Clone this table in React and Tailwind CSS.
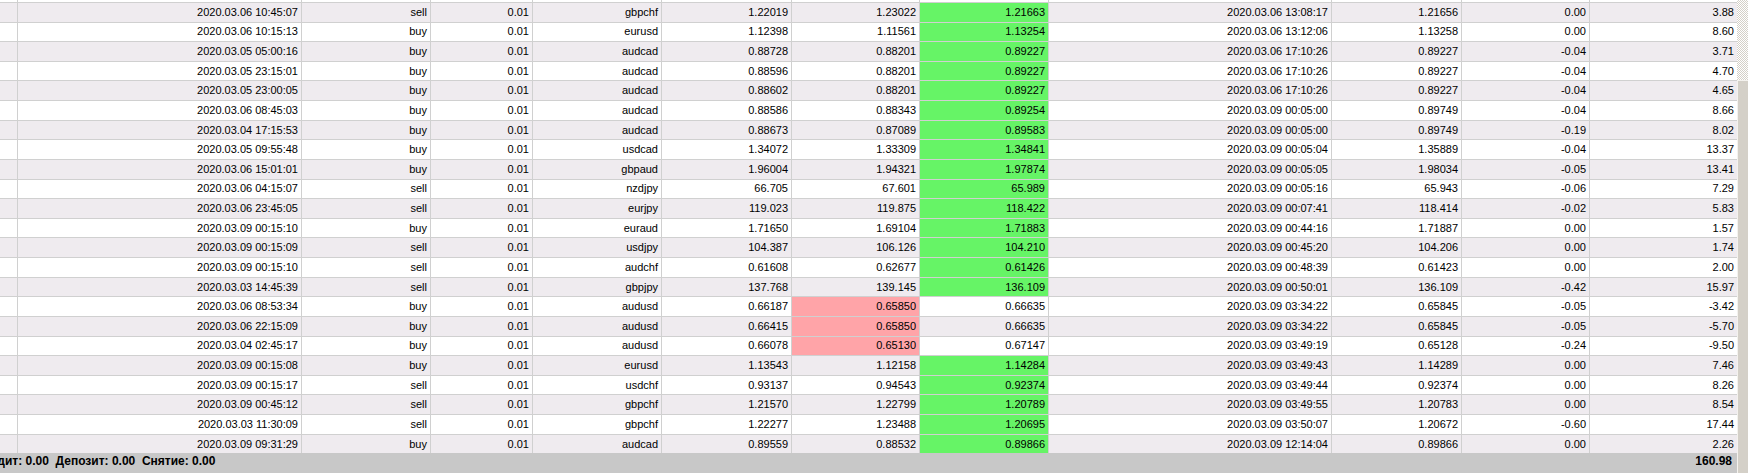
import React from "react";

const rows = [
  ["2020.03.06 10:45:07","sell","gbpchf","1.22019","1.23022","1.21663","2020.03.06 13:08:17","1.21656","0.00","3.88","g"],
  ["2020.03.06 10:15:13","buy","eurusd","1.12398","1.11561","1.13254","2020.03.06 13:12:06","1.13258","0.00","8.60","g"],
  ["2020.03.05 05:00:16","buy","audcad","0.88728","0.88201","0.89227","2020.03.06 17:10:26","0.89227","-0.04","3.71","g"],
  ["2020.03.05 23:15:01","buy","audcad","0.88596","0.88201","0.89227","2020.03.06 17:10:26","0.89227","-0.04","4.70","g"],
  ["2020.03.05 23:00:05","buy","audcad","0.88602","0.88201","0.89227","2020.03.06 17:10:26","0.89227","-0.04","4.65","g"],
  ["2020.03.06 08:45:03","buy","audcad","0.88586","0.88343","0.89254","2020.03.09 00:05:00","0.89749","-0.04","8.66","g"],
  ["2020.03.04 17:15:53","buy","audcad","0.88673","0.87089","0.89583","2020.03.09 00:05:00","0.89749","-0.19","8.02","g"],
  ["2020.03.05 09:55:48","buy","usdcad","1.34072","1.33309","1.34841","2020.03.09 00:05:04","1.35889","-0.04","13.37","g"],
  ["2020.03.06 15:01:01","buy","gbpaud","1.96004","1.94321","1.97874","2020.03.09 00:05:05","1.98034","-0.05","13.41","g"],
  ["2020.03.06 04:15:07","sell","nzdjpy","66.705","67.601","65.989","2020.03.09 00:05:16","65.943","-0.06","7.29","g"],
  ["2020.03.06 23:45:05","sell","eurjpy","119.023","119.875","118.422","2020.03.09 00:07:41","118.414","-0.02","5.83","g"],
  ["2020.03.09 00:15:10","buy","euraud","1.71650","1.69104","1.71883","2020.03.09 00:44:16","1.71887","0.00","1.57","g"],
  ["2020.03.09 00:15:09","sell","usdjpy","104.387","106.126","104.210","2020.03.09 00:45:20","104.206","0.00","1.74","g"],
  ["2020.03.09 00:15:10","sell","audchf","0.61608","0.62677","0.61426","2020.03.09 00:48:39","0.61423","0.00","2.00","g"],
  ["2020.03.03 14:45:39","sell","gbpjpy","137.768","139.145","136.109","2020.03.09 00:50:01","136.109","-0.42","15.97","g"],
  ["2020.03.06 08:53:34","buy","audusd","0.66187","0.65850","0.66635","2020.03.09 03:34:22","0.65845","-0.05","-3.42","r"],
  ["2020.03.06 22:15:09","buy","audusd","0.66415","0.65850","0.66635","2020.03.09 03:34:22","0.65845","-0.05","-5.70","r"],
  ["2020.03.04 02:45:17","buy","audusd","0.66078","0.65130","0.67147","2020.03.09 03:49:19","0.65128","-0.24","-9.50","r"],
  ["2020.03.09 00:15:08","buy","eurusd","1.13543","1.12158","1.14284","2020.03.09 03:49:43","1.14289","0.00","7.46","g"],
  ["2020.03.09 00:15:17","sell","usdchf","0.93137","0.94543","0.92374","2020.03.09 03:49:44","0.92374","0.00","8.26","g"],
  ["2020.03.09 00:45:12","sell","gbpchf","1.21570","1.22799","1.20789","2020.03.09 03:49:55","1.20783","0.00","8.54","g"],
  ["2020.03.03 11:30:09","sell","gbpchf","1.22277","1.23488","1.20695","2020.03.09 03:50:07","1.20672","-0.60","17.44","g"],
  ["2020.03.09 09:31:29","buy","audcad","0.89559","0.88532","0.89866","2020.03.09 12:14:04","0.89866","0.00","2.26","g"],
];

const GRID = "grid grid-cols-[18px_284px_129px_102px_129px_130px_128px_129px_283px_130px_128px_147px]";

function Cell({ children, color, last }) {
  const bg =
    color === "g" ? "bg-[#66f466]" : color === "r" ? "bg-[#ffa4a8]" : "";
  return (
    <div
      className={`flex items-center justify-end pr-[3px] ${last ? "" : "border-r border-[#d0d0d0]"} ${bg} whitespace-nowrap overflow-hidden`}
    >
      {children}
    </div>
  );
}

function Row({ r, i, isLast }) {
  const stripe = i % 2 === 0 ? "bg-[#efebef]" : "bg-white";
  const [open, type, sym, price, sl, tp, close, cprice, swap, profit, hit] = r;
  return (
    <div
      className={`${GRID} ${stripe} ${isLast ? "h-[19px]" : "h-[20px] border-b border-[#d0d0d0]"}`}
    >
      <Cell />
      <Cell>{open}</Cell>
      <Cell>{type}</Cell>
      <Cell>0.01</Cell>
      <Cell>{sym}</Cell>
      <Cell>{price}</Cell>
      <Cell color={hit === "r" ? "r" : ""}>{sl}</Cell>
      <Cell color={hit === "g" ? "g" : ""}>{tp}</Cell>
      <Cell>{close}</Cell>
      <Cell>{cprice}</Cell>
      <Cell>{swap}</Cell>
      <Cell last>{profit}</Cell>
    </div>
  );
}

export default function App() {
  return (
    <div
      className="w-[1748px] h-[473px] overflow-hidden flex bg-white text-black text-[11px] leading-[13px]"
      style={{ fontFamily: '"Liberation Sans", Arial, sans-serif' }}
    >
      <div className="w-[1737px] flex flex-col shrink-0">
        <div className={`${GRID} h-[3px] bg-white border-b border-[#d0d0d0] overflow-hidden`}>
          {Array.from({ length: 12 }).map((_, k) => (
            <div key={k} className={k === 11 ? "" : "border-r border-[#d0d0d0]"} />
          ))}
        </div>
        {rows.map((r, i) => (
          <Row key={i} r={r} i={i} isLast={i === rows.length - 1} />
        ))}
        <div className="h-[20px] bg-[#c8c8c8] flex items-start pt-px font-bold text-[12px] leading-[14px] whitespace-nowrap">
          <div className="flex-1 overflow-hidden">
            <span className="-ml-[24px] inline-block">
              Кредит: 0.00&nbsp;&nbsp;Депозит: 0.00&nbsp;&nbsp;Снятие: 0.00
            </span>
          </div>
          <div className="pr-[5px]">160.98</div>
        </div>
      </div>
      <div className="w-[11px] flex flex-col shrink-0">
        <div className="h-[80px] bg-[repeating-conic-gradient(#d4d0c8_0%_25%,#ffffff_0%_50%)] bg-size-[2px_2px]" />
        <div className="flex-1 bg-[#d4d0c8] border-l border-t border-[#f4f2ee]" />
      </div>
    </div>
  );
}
